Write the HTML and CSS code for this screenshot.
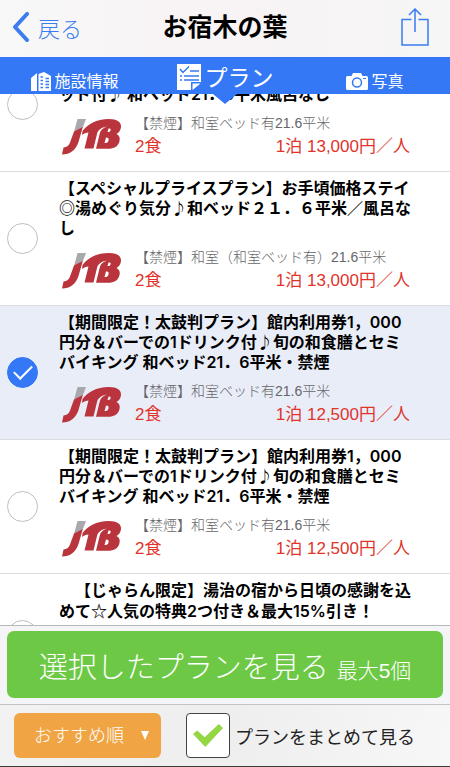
FILE: index.html
```html
<!DOCTYPE html>
<html lang="ja">
<head>
<meta charset="utf-8">
<meta name="viewport" content="width=device-width, initial-scale=1">
<title>お宿木の葉</title>
<link rel="stylesheet" href="styles.css">
</head>
<body>
<svg class="defs" aria-hidden="true">
  <symbol id="jtb" viewBox="0 0 60 36">
    <path fill="#a9a9ad" d="M15.500 0H24L20.500 9L12 13Z"/>
    <path fill="#b9343c" d="M12 12.500L20.800 8L16.500 23C14 31 8 35.500 0 35.500L1.500 28.500C5 28 7 26.500 8 23.500Z"/>
    <path fill="#b9343c" fill-rule="evenodd" d="M20.500 12C26 5 34 0 47 0C55 0 59.500 3 59 8C58.700 11.500 57 13.500 54.500 15C57.500 16.500 58.200 19 57.500 22C56.200 27.500 52 29.800 46 29.800H34L38 13.500C38.500 11.500 41 9 45 7.500C39 8.500 36 11 35 15L31.500 29.500H22.500L26.500 13.500C24 13.500 22 14.500 20 16ZM45.500 13L46.500 9.500C48.500 9.500 49 10 48.500 11.500C48.200 12.500 47.500 13 45.500 13ZM42.500 24L44 18.500C46.500 18.500 47 19.500 46.500 21.500C46 23.500 45 24 42.500 24Z"/>
  </symbol>
</svg>
<div class="app">
  <header class="navbar">
    <a class="back" href="#">
      <svg width="18" height="30" viewBox="0 0 18 30" aria-hidden="true"><path d="M15 2L3 15L15 28"/></svg>
      <span>戻る</span>
    </a>
    <h1>お宿木の葉</h1>
    <button class="share" type="button" aria-label="共有">
      <svg width="28" height="38" viewBox="0 0 28 38" aria-hidden="true"><path d="M10.500 11.500H1V37H27V11.500H17.500M14 24V1M8 7L14 1L20 7"/></svg>
    </button>
  </header>
  <nav class="tabs">
    <a href="#">
      <svg width="20" height="20" viewBox="0 0 20 20" aria-hidden="true">
        <path fill="#fff" d="M0 6L6 1V19H0ZM7.500 2L13 0L20 4V19H7.500Z"/>
        <path stroke="#3478f6" stroke-width="1.500" d="M9.500 5H12M9.500 8.500H12M9.500 12H12M9.500 15.500H12M14.500 6.500H18M14.500 9.500H18M14.500 12.500H18M14.500 15.500H18"/>
      </svg>
      <span>施設情報</span>
    </a>
    <a class="current" href="#" aria-current="page">
      <svg width="25" height="27" viewBox="0 0 25 27" aria-hidden="true">
        <path fill="#fff" d="M0 0H24V18H14V26H0ZM15.500 19.500H23.500L15.500 26Z"/>
        <path fill="none" stroke="#3478f6" stroke-width="1.500" d="M3 5L6 8.500L12 2.500M13 7H22M7 12H22M7 16H22M3 12H5M3 16H5"/>
      </svg>
      <span>プラン</span>
    </a>
    <a href="#">
      <svg width="22" height="17" viewBox="0 0 22 17" aria-hidden="true">
        <path fill="#fff" d="M1.500 3H5.500L7 0H15L16.500 3H20.500Q22 3 22 4.500V15.500Q22 17 20.500 17H1.500Q0 17 0 15.500V4.500Q0 3 1.500 3Z"/>
        <circle cx="11" cy="9.500" r="4.500" fill="none" stroke="#3478f6" stroke-width="1.500"/>
        <path stroke="#3478f6" d="M17 5.500H20"/>
      </svg>
      <span>写真</span>
    </a>
  </nav>
  <main class="plans">
    <label class="plan plan-scrolled">
      <input type="checkbox">
      <span class="body">
        <strong>ッド付♪ 和ベッド21．6平米風呂なし</strong>
        <span class="detail">
          <svg class="logo" role="img" aria-label="JTB"><use href="#jtb"/></svg>
          <span class="info">
            <span class="room">【禁煙】和室ベッド有21.6平米</span>
            <span class="price"><span>2食</span><span>1泊 13,000円／人</span></span>
          </span>
        </span>
      </span>
    </label>
    <label class="plan">
      <input type="checkbox">
      <span class="body">
        <strong>【スペシャルプライスプラン】お手頃価格ステイ◎湯めぐり気分♪和ベッド２１．６平米／風呂なし</strong>
        <span class="detail">
          <svg class="logo" role="img" aria-label="JTB"><use href="#jtb"/></svg>
          <span class="info">
            <span class="room">【禁煙】和室（和室ベッド有）21.6平米</span>
            <span class="price"><span>2食</span><span>1泊 13,000円／人</span></span>
          </span>
        </span>
      </span>
    </label>
    <label class="plan">
      <input type="checkbox" checked>
      <span class="body">
        <strong>【期間限定！太鼓判プラン】館内利用券1，000円分＆バーでの1ドリンク付♪旬の和食膳とセミバイキング 和ベッド21．6平米・禁煙</strong>
        <span class="detail">
          <svg class="logo" role="img" aria-label="JTB"><use href="#jtb"/></svg>
          <span class="info">
            <span class="room">【禁煙】和室ベッド有21.6平米</span>
            <span class="price"><span>2食</span><span>1泊 12,500円／人</span></span>
          </span>
        </span>
      </span>
    </label>
    <label class="plan">
      <input type="checkbox">
      <span class="body">
        <strong>【期間限定！太鼓判プラン】館内利用券1，000円分＆バーでの1ドリンク付♪旬の和食膳とセミバイキング 和ベッド21．6平米・禁煙</strong>
        <span class="detail">
          <svg class="logo" role="img" aria-label="JTB"><use href="#jtb"/></svg>
          <span class="info">
            <span class="room">【禁煙】和室ベッド有21.6平米</span>
            <span class="price"><span>2食</span><span>1泊 12,500円／人</span></span>
          </span>
        </span>
      </span>
    </label>
    <label class="plan plan-last">
      <input type="checkbox">
      <span class="body">
        <strong>　【じゃらん限定】湯治の宿から日頃の感謝を込めて<span class="symbol">☆</span>人気の特典2つ付き＆最大15%引き！</strong>
      </span>
    </label>
  </main>
  <div class="submit-bar">
    <button class="submit" type="button">選択したプランを見る <small>最大5個</small></button>
  </div>
  <footer class="options">
    <div class="sort">
      <select aria-label="並び順"><option>おすすめ順</option></select>
      <svg width="8" height="9" viewBox="0 0 8 9" aria-hidden="true"><path fill="#fff" d="M0 0H8L4 9Z"/></svg>
    </div>
    <label class="group">
      <input type="checkbox" checked>
      <span>プランをまとめて見る</span>
    </label>
  </footer>
</div>
</body>
</html>
```

FILE: styles.css
```css
* { box-sizing: border-box; }

body {
  margin: 0;
  background: #fff;
  color: #000;
  font-family: "Liberation Sans", "Noto Sans CJK JP", sans-serif;
  text-spacing-trim: space-all;
}

button, select, input { font: inherit; margin: 0; }
a { text-decoration: none; }
svg { flex: none; }
.defs { display: none; }

.app {
  display: flex;
  flex-direction: column;
  height: 100vh;
  border-bottom: 1px solid #3c3c3c;
}

/* Header */
.navbar {
  display: grid;
  grid-template-columns: 1fr auto 1fr;
  align-items: center;
  flex: none;
  height: 57px;
  padding: 0 21px 4px;
  background: linear-gradient(90deg, #f8f8f8, #f8f3f4 45%, #f6f6f6);
}
.back {
  display: flex;
  align-items: center;
  gap: 8px;
  margin-left: -9px;
  color: #3b7cf0;
  font-size: 22px;
  font-weight: 300;
}
.back path { fill: none; stroke: #3b7cf0; stroke-width: 4; stroke-linecap: round; stroke-linejoin: round; }
.navbar h1 { margin: 0; font-size: 25px; font-weight: 700; line-height: 32px; }
.share { display: flex; justify-self: end; padding: 0; border: 0; background: none; }
.share path { fill: none; stroke: #3b7cf0; stroke-width: 1.5; }

.tabs {
  position: relative;
  z-index: 1;
  display: grid;
  grid-template-columns: repeat(3, 1fr);
  flex: none;
  height: 37px;
  background: #3478f6;
}
.tabs a {
  display: flex;
  align-items: center;
  justify-content: center;
  gap: 3px;
  padding-top: 12px;
  color: #fff;
  font-size: 16px;
  line-height: 20px;
}
.tabs .current { padding-top: 4px; font-size: 23px; line-height: 28px; }
.tabs::after {
  content: "";
  position: absolute;
  top: 100%;
  left: 50%;
  margin-left: -12px;
  border: 12px solid transparent;
  border-top: 10px solid #3478f6;
  border-bottom: 0;
}

/* Plan list */
.plans { flex: 1; min-height: 0; overflow: hidden; }
.plan {
  display: flex;
  align-items: center;
  gap: 21px;
  min-height: 134px;
  padding: 0 34px 0 7px;
  border-bottom: 1px solid #dcdce0;
}
.plan:has(:checked) { background: #e9edf8; }
.plan input {
  appearance: none;
  display: grid;
  place-items: center;
  flex: none;
  width: 31px;
  height: 31px;
  border: 1px solid #bfbfc3;
  border-radius: 50%;
  background: #fff;
}
.plan input:checked { border-color: #3478f6; background: #3478f6; }
.plan input:checked::after {
  content: "";
  width: 8px;
  height: 16px;
  margin-top: -5px;
  border: solid #fff;
  border-width: 0 2px 2px 0;
  transform: rotate(45deg);
}
.body {
  flex: 1;
  align-self: flex-start;
  min-width: 0;
  padding-top: 6px;
}
.plan strong {
  display: block;
  font-family: Inter, "Noto Sans CJK JP", sans-serif;
  font-size: 16px;
  font-weight: 600;
  line-height: 20px;
  line-break: anywhere;
}
.symbol { font-family: "Noto Sans CJK JP", sans-serif; }
.detail { display: flex; gap: 13px; padding: 9px 6px 0 3px; }
.logo { width: 60px; height: 36px; margin-top: 6px; }
.info { flex: 1; }
.room { display: block; color: #666669; font-size: 14px; font-weight: 300; line-height: 20px; }
.price {
  display: flex;
  justify-content: space-between;
  padding-top: 2px;
  color: #e0342b;
  font-size: 17px;
  line-height: 24px;
}
.plan-scrolled { margin-top: -56px; }
.plan-scrolled strong { padding-top: 40px; }
.plan-last { min-height: 124px; }

/* Bottom bars */
.submit-bar {
  flex: none;
  padding: 5px 7px 6px;
  border-top: 1px solid #b8b8bc;
  background: #f5f4f6;
}
.submit {
  display: block;
  width: 100%;
  height: 67px;
  padding: 0;
  border: 0;
  border-radius: 7px;
  background: #6dc945;
  color: #fff;
  font-size: 29px;
  font-weight: 300;
}
.submit small { font-size: 21px; }

.options {
  display: flex;
  align-items: center;
  flex: none;
  gap: 25px;
  padding: 8px 14px;
  border-top: 1px solid #c4c4c8;
  background: linear-gradient(100deg, #f3f2f3, #eeeeef 50%, #f7f7f7);
}
.sort { display: grid; align-items: center; width: 147px; }
.sort select, .sort svg { grid-area: 1 / 1; }
.sort select {
  appearance: none;
  width: 100%;
  height: 45px;
  padding: 0 20px;
  border: 0;
  border-radius: 6px;
  background: #f0a444;
  color: #fff;
  font-size: 18px;
  font-weight: 300;
}
.sort svg { justify-self: end; margin-right: 12px; pointer-events: none; }
.group { display: flex; align-items: center; gap: 5px; font-size: 18px; color: #222; white-space: nowrap; }
.group input {
  appearance: none;
  display: grid;
  place-items: center;
  width: 44px;
  height: 45px;
  border: 1px solid #444;
  border-radius: 4px;
  background: #fff;
}
.group input:checked::after {
  content: "";
  width: 30px;
  height: 23px;
  background: #94d644;
  clip-path: polygon(0 44%, 14% 28%, 39% 58%, 86% 0, 100% 17%, 41% 100%);
}
```
